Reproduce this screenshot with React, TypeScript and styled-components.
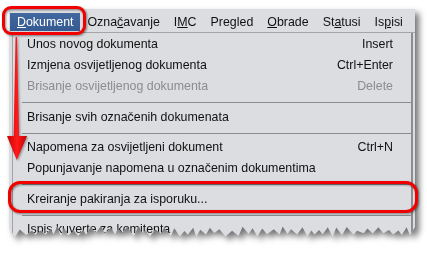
import React from "react";
import styled, {createGlobalStyle} from "styled-components";

const GlobalStyle = createGlobalStyle`
    html, body{
        margin: 0;
        padding: 0;
        background: #ffffff;
    }
    body{
        font-family: "Liberation Sans", Arial, sans-serif;
    }
`

// jagged "torn paper" bottom edge, deterministic
const W = 406;
const tearEdge = (() => {
    let seed = 7;
    const rnd = () => {
        seed = (seed * 9301 + 49297) % 233280;
        return seed / 233280;
    };
    const pts: string[] = [`0 0`, `${W}px 0`, `${W}px 218px`];
    let x = W;
    let i = 0;
    while (x > 0) {
        x -= 3 + rnd() * 4;
        if (x < 0) x = 0;
        const y = i % 2 === 0 ? 224 + rnd() * 4 : 217 + rnd() * 5;
        pts.push(`${x.toFixed(1)}px ${y.toFixed(1)}px`);
        i++;
    }
    pts.push(`0 219px`);
    return `polygon(${pts.join(", ")})`;
})();

const Stage = styled.div`
    position: relative;
    width: 427px;
    height: 255px;
    overflow: hidden;
    padding: 9px 0 0 9px;
    box-sizing: border-box;
    background: #ffffff;
`

const Shot = styled.div`
    width: ${W}px;
    filter: drop-shadow(4px 4px 3px rgba(0, 0, 0, 0.55));
`

const Window = styled.div`
    height: 232px;
    background: #dcdde1;
    clip-path: ${tearEdge};
    font-size: 12.4px;
    color: #111111;
`

const MenuBar = styled.div`
    display: flex;
    align-items: center;
    height: 19px;
    padding: 3px 0 1px 1px;
    border-bottom: 1px solid #a4a5a8;
`

const MenuTitle = styled.div<{$active?: boolean}>`
    height: 18px;
    line-height: 19px;
    padding: 0 7px;
    white-space: nowrap;
    color: ${p => p.$active ? "#ffffff" : "#111111"};
    background: ${p => p.$active ? "linear-gradient(#4268a0, #365a90)" : "transparent"};
`

const Popup = styled.div`
    display: flex;
    flex-direction: column;
    margin-left: 3px;
    width: 401px;
    box-sizing: border-box;
    height: 200px;
    padding-top: 1px;
    border-left: 1px solid #a2a3a6;
    border-right: 2px solid #8d8e91;
`

const Item = styled.div<{$disabled?: boolean}>`
    display: flex;
    justify-content: space-between;
    flex: 0 0 21px;
    line-height: 21px;
    padding: 0 18px 0 14px;
    white-space: nowrap;
    color: ${p => p.$disabled ? "#8b8c8f" : "#111111"};
`

const Separator = styled.div`
    flex: 0 0 auto;
    height: 1px;
    margin: 5px 0 3.5px 9px;
    background: #8a8b8e;
`

const Mark = styled.div<{$x: number; $y: number; $w: number; $h: number; $r: number}>`
    position: absolute;
    left: ${p => p.$x}px;
    top: ${p => p.$y}px;
    width: ${p => p.$w}px;
    height: ${p => p.$h}px;
    box-sizing: border-box;
    border: 3px solid #f20000;
    border-radius: ${p => p.$r}px;
    filter: drop-shadow(1px 1px 1px rgba(0, 0, 0, 0.45));
`

const Arrow = styled.svg`
    position: absolute;
    left: 0;
    top: 0;
    filter: drop-shadow(1px 1px 1px rgba(0, 0, 0, 0.4));
`

const menus: [string, string, string][] = [
    ["", "D", "okument"],
    ["Ozna", "č", "avanje"],
    ["I", "M", "C"],
    ["Pre", "g", "led"],
    ["", "O", "brade"],
    ["St", "a", "tusi"],
    ["Is", "p", "isi"],
];

type Row = {label?: string; key?: string; disabled?: boolean; sep?: boolean};

const rows: Row[] = [
    {label: "Unos novog dokumenta", key: "Insert"},
    {label: "Izmjena osvijetljenog dokumenta", key: "Ctrl+Enter"},
    {label: "Brisanje osvijetljenog dokumenta", key: "Delete", disabled: true},
    {sep: true},
    {label: "Brisanje svih označenih dokumenata"},
    {sep: true},
    {label: "Napomena za osvijetljeni dokument", key: "Ctrl+N"},
    {label: "Popunjavanje napomena u označenim dokumentima"},
    {sep: true},
    {label: "Kreiranje pakiranja za isporuku..."},
    {sep: true},
    {label: "Ispis kuverte za komitenta"},
];

export default function App() {
    return (
        <>
            <GlobalStyle/>
            <Stage>
                <Shot>
                    <Window>
                        <MenuBar>
                            {menus.map(([a, u, b], i) => (
                                <MenuTitle key={i} $active={i === 0}>
                                    {a}<u>{u}</u>{b}
                                </MenuTitle>
                            ))}
                        </MenuBar>
                        <Popup>
                            {rows.map((r, i) => r.sep
                                ? <Separator key={i}/>
                                : (
                                    <Item key={i} $disabled={r.disabled}>
                                        <span>{r.label}</span>
                                        <span>{r.key}</span>
                                    </Item>
                                )
                            )}
                        </Popup>
                    </Window>
                </Shot>
                <Mark $x={2} $y={6} $w={84} $h={29} $r={9}/>
                <Mark $x={8} $y={181} $w={410} $h={32} $r={12}/>
                <Arrow width="30" height="165" viewBox="0 0 30 165">
                    <defs>
                        <linearGradient id="arrowFill" x1="0" x2="1" y1="0" y2="0">
                            <stop offset="0" stopColor="#c80000"/>
                            <stop offset="0.5" stopColor="#ff1a1a"/>
                            <stop offset="1" stopColor="#c00000"/>
                        </linearGradient>
                    </defs>
                    <polygon
                        points="15.6,37 17,37 19,136 27,136 16.8,160 7,136 13.6,136"
                        fill="url(#arrowFill)"
                    />
                </Arrow>
            </Stage>
        </>
    );
}
